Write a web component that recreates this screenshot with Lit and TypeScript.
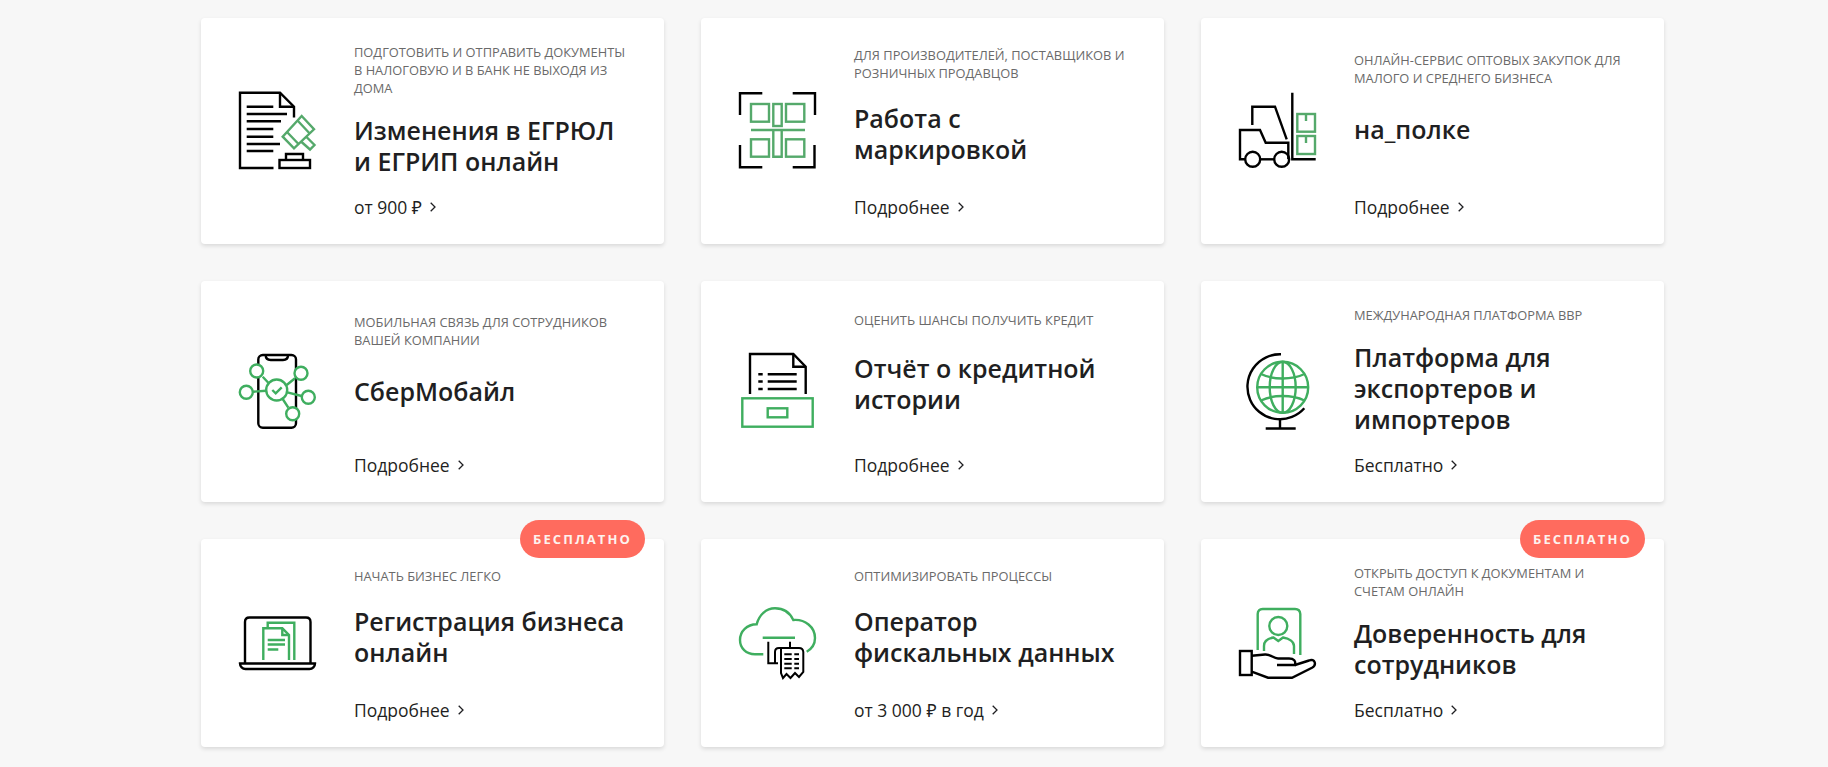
import { LitElement, html, css, svg } from "lit";
import { customElement } from "lit/decorators.js";

const K = "#000";
const G = "#3fae5f";
const M = "#55a96b";

const ICONS: Record<string, { vb: string; draw: any }> = {
  egrul: {
    vb: "5 1 110 100",
    draw: svg`
      <g stroke=${K}>
        <path d="M53.500 88H20V12.700H60L74 26.700V37.500"/><path d="M60 12.700V26.700H74"/>
        <path d="M26.700 26.700H53.300M26.700 34H67M26.700 41.300H61M26.700 49H53.300M26.700 56.700H53.300M26.700 64H60M26.700 71H53.300"/>
        <rect x="59.500" y="80" width="30.500" height="8"/><path d="M66 80V74H83V80"/>
      </g>
      <g stroke=${M}>
        <path d="M81.700 36L94 49.300L74 68.300L62.700 56.700Z"/>
        <path d="M77.500 40.500L89.700 53.500M67 52L78.500 64"/>
        <path d="M81 61.500L90 69.500L94.500 65L86 56.500"/>
      </g>`,
  },
  mark: {
    vb: "0 1 110 100",
    draw: svg`
      <g stroke=${K}><path d="M15 35V13.300H37.300M67.700 13.300H90V35M15 65V87.300H37.300M67.700 87.300H89.500V65"/></g>
      <g stroke=${M}>
        <rect x="26" y="24" width="18" height="17.700"/><rect x="61" y="24" width="18.300" height="17.700"/>
        <rect x="26" y="59.300" width="18" height="17.400"/><rect x="61" y="59.300" width="18.300" height="17.400"/>
        <rect x="48.300" y="24" width="8.400" height="22"/>
        <path d="M26 50H80M48.300 50V76.700H56.700V50"/>
      </g>`,
  },
  fork: {
    vb: "0 1 110 100",
    draw: svg`
      <g stroke=${K}>
        <path d="M67.300 12.700V79.300H90.700"/><path d="M27.300 45V26.700H50L61.700 59.300"/>
        <path d="M20 79.300H15V50H35L40.700 62.700H63.300V79.300"/><path d="M35 79.300H49.500"/>
        <circle cx="27.700" cy="79.300" r="7.500"/><circle cx="56.700" cy="79.300" r="7.500"/>
      </g>
      <g stroke=${M}>
        <rect x="72.300" y="34" width="17.700" height="17.700"/><path d="M81 34V41"/>
        <rect x="72.300" y="56" width="17.700" height="18"/><path d="M81 56V63"/>
      </g>`,
  },
  mobile: {
    vb: "0 1 110 100",
    draw: svg`
      <g stroke=${K}>
        <rect x="33.300" y="15" width="37.700" height="72.700" rx="4.500"/>
        <path d="M40.700 15c0 3 2 5 5 5H58c3 0 5-2 5-5"/>
      </g>
      <g stroke=${G} fill="#fff">
        <path d="M37.700 36.700L43.300 42.700M28 51.700L41 50.700M70 38.300L61.700 45M76.700 56L62.300 52.300M63.300 67.700L57.700 59"/>
        <circle cx="51.700" cy="50" r="10.500"/><circle cx="31.700" cy="31" r="6.500"/><circle cx="21.300" cy="52.300" r="6.500"/>
        <circle cx="76" cy="33.300" r="6.500"/><circle cx="83.300" cy="57.300" r="6.500"/><circle cx="67.700" cy="73.700" r="6.500"/>
        <path d="M47.300 50L50.700 53.300L56.700 47.300" fill="none"/>
      </g>`,
  },
  report: {
    vb: "0 1 110 100",
    draw: svg`
      <g stroke=${K}>
        <path d="M25 54V14H68.300L80.700 26.700V54"/><path d="M68.300 14V26.700H80.700"/>
        <path d="M33.300 34.300H37.700M42.700 34.300H71.700M33.300 41.500H37.700M42.700 41.500H71.700M33.300 49H37.700M42.700 49H71.700"/>
      </g>
      <g stroke=${G}>
        <rect x="17.300" y="58.300" width="70.400" height="28.400"/><rect x="42.700" y="68.300" width="19.600" height="9"/>
      </g>`,
  },
  globe: {
    vb: "0 1 110 100",
    draw: svg`
      <g stroke=${G}>
        <circle cx="57.700" cy="47.300" r="25.500"/><ellipse cx="57.700" cy="47.300" rx="13" ry="25.500"/>
        <path d="M57.700 21.800V72.800M32.200 47.300H83.200"/>
        <path d="M36 34c12 6 31 6 43.500 0M36 60.500c12-6 31-6 43.500 0"/>
      </g>
      <g stroke=${K}>
        <path d="M56 14.300A32.500 32.500 0 1 0 79.300 68.300"/><path d="M55 79V88.500M40.700 88.500H70.700"/>
      </g>`,
  },
  laptop: {
    vb: "0 -7 110 100",
    draw: svg`
      <g stroke=${K}>
        <path d="M20 63.500V22q0-4.500 4.500-4.500H81q4.500 0 4.500 4.500V63.500"/>
        <path d="M15 63.500H90c0 3-2.500 5.500-5.500 5.500H20.500c-3 0-5.500-2.500-5.500-5.500Z"/>
      </g>
      <g stroke=${G}>
        <path d="M38.300 60V28.300H57.300L64 35V60"/><path d="M57.300 28.300V35H64"/>
        <path d="M42.700 28.300V22.700H69.300V60"/>
        <path d="M42.700 40H60M42.700 44.500H60M42.700 49.500H53.300"/>
      </g>`,
  },
  cloud: {
    vb: "0 -2 110 100",
    draw: svg`
      <g stroke=${G}>
        <path d="M38.300 59.300H30C21 59.300 15 53 15 45C15 36 22 29.500 31.700 29.300C34 20 41 13.300 50 13.300C58.500 13.300 65 18 68.300 25C80 24 90 32 90 43C90 49 86.500 54 81.700 56.700"/>
        <path d="M37.700 42.700H70"/>
      </g>
      <g stroke=${K} stroke-width="2">
        <path d="M43.300 46.700V68.300H53M65 46.700V52.500"/>
        <path d="M50 68V57q0-4 4-4H74q4 0 4.300 4V77L74 82L70 78L65.500 83L61.500 79L58 83L56 78V53"/>
        <path d="M59.300 59.300H66.700M69.300 59.300H74M59.300 64H66.700M69.300 64H74M59.300 68.700H66.700M69.300 68.700H74M59.300 73.300H66.700M69.300 73.300H74"/>
      </g>`,
  },
  hand: {
    vb: "0 -2 110 100",
    draw: svg`
      <g stroke=${G}>
        <path d="M32.700 55V19q0-5 5-5H70q5 0 5.300 5V60"/>
        <circle cx="53.300" cy="31" r="9"/>
        <path d="M39 56V51c0-4.500 4-7.500 9.500-8.500L53.300 46L58 42.500c6 1 11 4 11 8.500V59"/>
      </g>
      <g stroke=${K}>
        <rect x="15" y="56" width="11.700" height="24"/>
        <path d="M26.700 60.700L40 59.500C46 59 48 63.500 53 63.500H64C69 63.500 71 66 70 70H52"/>
        <path d="M26.700 76.700L43 82.700H67L87 72.700C92 70 90 63 84 65.500L70 70"/>
      </g>`,
  },
};

interface Item {
  icon: string;
  caption: string;
  title: string;
  link: string;
  free?: boolean;
}

const ITEMS: Item[] = [
  { icon: "egrul", caption: "Подготовить и отправить документы в налоговую и в банк не выходя из дома", title: "Изменения в ЕГРЮЛ и ЕГРИП онлайн", link: "от 900 ₽" },
  { icon: "mark", caption: "Для производителей, поставщиков и розничных продавцов", title: "Работа с маркировкой", link: "Подробнее" },
  { icon: "fork", caption: "Онлайн-сервис оптовых закупок для малого и среднего бизнеса", title: "на_полке", link: "Подробнее" },
  { icon: "mobile", caption: "Мобильная связь для сотрудников вашей компании", title: "СберМобайл", link: "Подробнее" },
  { icon: "report", caption: "Оценить шансы получить кредит", title: "Отчёт о кредитной истории", link: "Подробнее" },
  { icon: "globe", caption: "Международная платформа ВВР", title: "Платформа для экспортеров и импортеров", link: "Бесплатно" },
  { icon: "laptop", caption: "Начать бизнес легко", title: "Регистрация бизнеса онлайн", link: "Подробнее", free: true },
  { icon: "cloud", caption: "Оптимизировать процессы", title: "Оператор фискальных данных", link: "от 3 000 ₽ в год" },
  { icon: "hand", caption: "Открыть доступ к документам и счетам онлайн", title: "Доверенность для сотрудников", link: "Бесплатно", free: true },
];

@customElement("app-root")
export class AppRoot extends LitElement {
  static styles = css`
    :host {
      display: block;
      min-height: 767px;
      background: #f7f7f7;
      font-family: "Open Sans", "Noto Sans", sans-serif;
      color: #1f1f22;
      overflow: hidden;
    }
    .grid {
      display: grid;
      grid-template-columns: repeat(3, 463px);
      column-gap: 37px;
      row-gap: 37px;
      padding: 18px 0 20px 201px;
    }
    .card {
      position: relative;
      display: flex;
      align-items: center;
      background: #fff;
      border-radius: 4px;
      box-shadow: 0 2px 4px rgba(0, 0, 0, 0.12);
      padding: 25px 30px 26px 24px;
    }
    .icon {
      flex: none;
      width: 110px;
      height: 100px;
      margin-right: 19px;
    }
    .icon svg {
      display: block;
      width: 110px;
      height: 100px;
      fill: none;
      stroke-width: 2.4;
    }
    .text {
      flex: 1;
      min-width: 0;
      align-self: stretch;
      display: flex;
      flex-direction: column;
    }
    .main {
      flex: 1;
      display: flex;
      flex-direction: column;
      padding-bottom: 19.5px;
    }
    .main::before {
      content: "";
      flex: 10 0 0;
    }
    .main::after {
      content: "";
      flex: 38 0 0;
    }
    .gap {
      flex: 12 0 17.5px;
    }
    .caption {
      font-size: 12.85px;
      line-height: 18px;
      text-transform: uppercase;
      color: #6a6a6a;
    }
    .title {
      font-size: 25px;
      line-height: 31px;
      font-weight: 600;
      color: #1f1f22;
    }
    .link {
      display: flex;
      align-items: center;
      gap: 8px;
      font-size: 17.5px;
      line-height: 22px;
    }
    .link svg {
      width: 6px;
      height: 10px;
      fill: none;
      stroke: #1f1f22;
      stroke-width: 1.3;
    }
    .badge {
      position: absolute;
      top: -19px;
      right: 19px;
      height: 38px;
      width: 125px;
      display: flex;
      align-items: center;
      justify-content: center;
      border-radius: 19px;
      background: #ff6b5e;
      color: #fdf2ee;
      font-size: 13px;
      font-weight: 700;
      letter-spacing: 2.1px;
    }
  `;

  render() {
    return html`<div class="grid">
      ${ITEMS.map((it) => {
        const ic = ICONS[it.icon];
        return html`<div class="card">
          ${it.free ? html`<div class="badge">БЕСПЛАТНО</div>` : null}
          <div class="icon"><svg viewBox=${ic.vb}>${ic.draw}</svg></div>
          <div class="text">
            <div class="main">
              <div class="caption">${it.caption}</div>
              <div class="gap"></div>
              <div class="title">${it.title}</div>
            </div>
            <div class="link">
              <span>${it.link}</span>
              <svg viewBox="0 0 6 10"><path d="M0.700 0.700L5 5L0.700 9.300"/></svg>
            </div>
          </div>
        </div>`;
      })}
    </div>`;
  }
}
